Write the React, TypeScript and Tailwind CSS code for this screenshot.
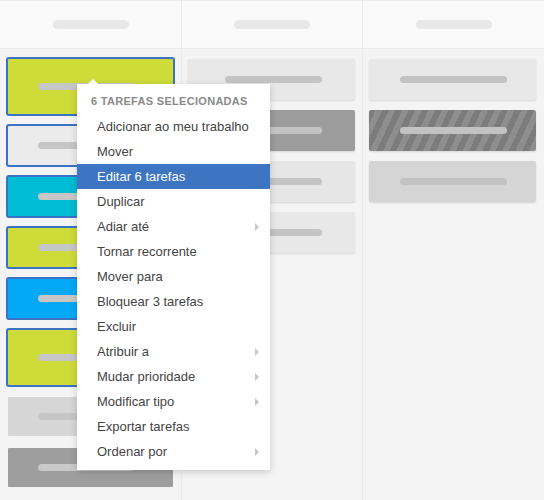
import React from 'react';

type Card = {
  bg: string;
  h: string;
  selected?: boolean;
  pill?: string;
};

const col1: Card[] = [
  { bg: 'bg-[#cddc39]', h: 'h-[59px]', selected: true },
  { bg: 'bg-[#ebebeb]', h: 'h-[43px]', selected: true },
  { bg: 'bg-[#00bcd4]', h: 'h-[43px]', selected: true },
  { bg: 'bg-[#cddc39]', h: 'h-[43px]', selected: true },
  { bg: 'bg-[#03a9f4]', h: 'h-[43px]', selected: true },
  { bg: 'bg-[#cddc39]', h: 'h-[59px]', selected: true },
  { bg: 'bg-[#d6d6d6]', h: 'h-[43px]' },
  { bg: 'bg-[#9e9e9e]', h: 'h-[43px]', pill: 'bg-[#c9c9c9]' },
];

const col2: string[] = ['bg-[#e8e8e8]', 'bg-[#9c9c9c]', 'bg-[#e6e6e6]', 'bg-[#e8e8e8]'];

const striped =
  'bg-[repeating-linear-gradient(115deg,#7c7c7c_0px,#7c7c7c_6px,#8e8e8e_6px,#8e8e8e_12px)]';

const col3: string[] = ['bg-[#e8e8e8]', striped, 'bg-[#d5d5d5]'];

const menuItems: { label: string; sub?: boolean; active?: boolean }[] = [
  { label: 'Adicionar ao meu trabalho' },
  { label: 'Mover' },
  { label: 'Editar 6 tarefas', active: true },
  { label: 'Duplicar' },
  { label: 'Adiar até', sub: true },
  { label: 'Tornar recorrente' },
  { label: 'Mover para' },
  { label: 'Bloquear 3 tarefas' },
  { label: 'Excluir' },
  { label: 'Atribuir a', sub: true },
  { label: 'Mudar prioridade', sub: true },
  { label: 'Modificar tipo', sub: true },
  { label: 'Exportar tarefas' },
  { label: 'Ordenar por', sub: true },
];

const HeaderPill = () => (
  <div className="h-[49px] border-t border-b border-[#ececec] bg-[#fafafa] flex items-center justify-center">
    <div className="h-[9px] w-[76px] rounded-full bg-[#e8e8e8]" />
  </div>
);

const ContextMenu = () => (
  <div className="absolute left-[77px] top-[84px] w-[193px] bg-white shadow-[0_2px_7px_rgba(0,0,0,0.18)] pb-[6px]">
    <div className="absolute -top-[5px] left-[11px] w-0 h-0 border-x-[5px] border-x-transparent border-b-[5px] border-b-white" />
    <div className="h-[30px] pt-[11px] pl-[14px] text-[11px] leading-[13px] font-bold tracking-[0.3px] text-[#8a8a8a] uppercase">
      6 tarefas selecionadas
    </div>
    {menuItems.map((it) => (
      <div
        key={it.label}
        className={`h-[25px] flex items-center justify-between pl-[20px] pr-[11px] text-[13px] ${
          it.active ? 'bg-[#3d75c2] text-white' : 'text-[#444444]'
        }`}
      >
        <span>{it.label}</span>
        {it.sub && (
          <span className="w-0 h-0 border-y-[4px] border-y-transparent border-l-[4px] border-l-[#c6c6c6]" />
        )}
      </div>
    ))}
  </div>
);

export default function App() {
  return (
    <div
      className="relative w-[544px] h-[500px] overflow-hidden bg-[#f4f4f4]"
      style={{ fontFamily: '"Liberation Sans", Arial, sans-serif' }}
    >
      <div className="flex h-full">
        <div className="w-[182px] h-full border-r border-[#ebebeb]">
          <HeaderPill />
          <div className="flex flex-col gap-[8px] pt-[8px] pl-[6px]">
            {col1.map((c, i) => (
              <div
                key={i}
                className={`${c.h} w-[169px] rounded-[3px] border-2 flex items-center pl-[30px] ${
                  c.selected
                    ? `border-[#3b72c4] ${c.bg}`
                    : `border-transparent bg-clip-padding ${c.bg}`
                }`}
              >
                <div className={`h-[7px] w-[96px] rounded-full ${c.pill ?? 'bg-[#c6c6c6]'}`} />
              </div>
            ))}
          </div>
        </div>
        <div className="w-[181px] h-full border-r border-[#ebebeb]">
          <HeaderPill />
          <div className="flex flex-col gap-[10px] pt-[10px] pl-[6px]">
            {col2.map((bg, i) => (
              <div
                key={i}
                className={`h-[41px] w-[167px] rounded-[2px] ${bg} shadow-[0_1px_2px_rgba(0,0,0,0.12)] flex items-center pl-[37px]`}
              >
                <div className="h-[7px] w-[97px] rounded-full bg-[#c4c4c4]" />
              </div>
            ))}
          </div>
        </div>
        <div className="flex-1 h-full">
          <HeaderPill />
          <div className="flex flex-col gap-[10px] pt-[10px] pl-[6px]">
            {col3.map((bg, i) => (
              <div
                key={i}
                className={`h-[41px] w-[167px] rounded-[2px] ${bg} shadow-[0_1px_2px_rgba(0,0,0,0.12)] flex items-center pl-[31px]`}
              >
                <div className="h-[7px] w-[107px] rounded-full bg-[#c2c2c2]" />
              </div>
            ))}
          </div>
        </div>
      </div>
      <ContextMenu />
    </div>
  );
}
